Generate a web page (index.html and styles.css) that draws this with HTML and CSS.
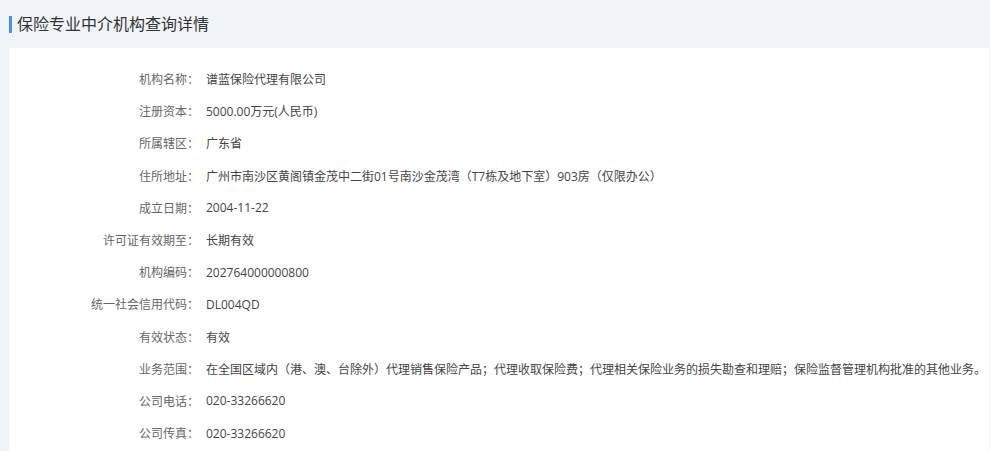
FILE: index.html
```html
<!DOCTYPE html>
<html lang="zh-CN">
<head>
  <meta charset="UTF-8">
  <title>保险专业中介机构查询详情</title>
  <link rel="stylesheet" href="styles.css">
</head>
<body>
  <div class="page">
    <h2 class="title">保险专业中介机构查询详情</h2>

    <div class="panel">
      <div class="row"><span class="label">机构名称：</span><span class="value">谱蓝保险代理有限公司</span></div>
      <div class="row"><span class="label">注册资本：</span><span class="value">5000.00万元(人民币)</span></div>
      <div class="row"><span class="label">所属辖区：</span><span class="value">广东省</span></div>
      <div class="row"><span class="label">住所地址：</span><span class="value">广州市南沙区黄阁镇金茂中二街01号南沙金茂湾（T7栋及地下室）903房（仅限办公）</span></div>
      <div class="row"><span class="label">成立日期：</span><span class="value">2004-11-22</span></div>
      <div class="row"><span class="label">许可证有效期至：</span><span class="value">长期有效</span></div>
      <div class="row"><span class="label">机构编码：</span><span class="value">202764000000800</span></div>
      <div class="row"><span class="label">统一社会信用代码：</span><span class="value">DL004QD</span></div>
      <div class="row"><span class="label">有效状态：</span><span class="value">有效</span></div>
      <div class="row"><span class="label">业务范围：</span><span class="value">在全国区域内（港、澳、台除外）代理销售保险产品；代理收取保险费；代理相关保险业务的损失勘查和理赔；保险监督管理机构批准的其他业务。</span></div>
      <div class="row"><span class="label">公司电话：</span><span class="value">020-33266620</span></div>
      <div class="row"><span class="label">公司传真：</span><span class="value">020-33266620</span></div>
    </div>
  </div>
</body>
</html>
```

FILE: styles.css
```css
body {
  margin: 0;
  background-color: #f0f3f8;
  font-family: "Open Sans", "Noto Sans CJK SC", sans-serif;
  color: #333;
}
.page {
  padding: 0 1px 0 9px;
}
.title {
  margin: 0;
  height: 48px;
  display: flex;
  align-items: center;
  font-size: 16px;
  font-weight: normal;
  color: #333;
  line-height: 18px;
}
.title::before {
  content: "";
  width: 3px;
  height: 17px;
  background-color: #4a8ee0;
  margin-right: 5px;
}
.panel {
  background-color: #fff;
  padding-top: 15px;
  min-height: 403px;
  box-sizing: border-box;
}
.row {
  display: flex;
  height: 32.2px;
  align-items: center;
  font-size: 12px;
  white-space: nowrap;
}
.label {
  width: 190px;
  text-align: right;
  color: #666;
  flex-shrink: 0;
}
.value {
  padding-left: 7px;
  color: #444;
}
```
